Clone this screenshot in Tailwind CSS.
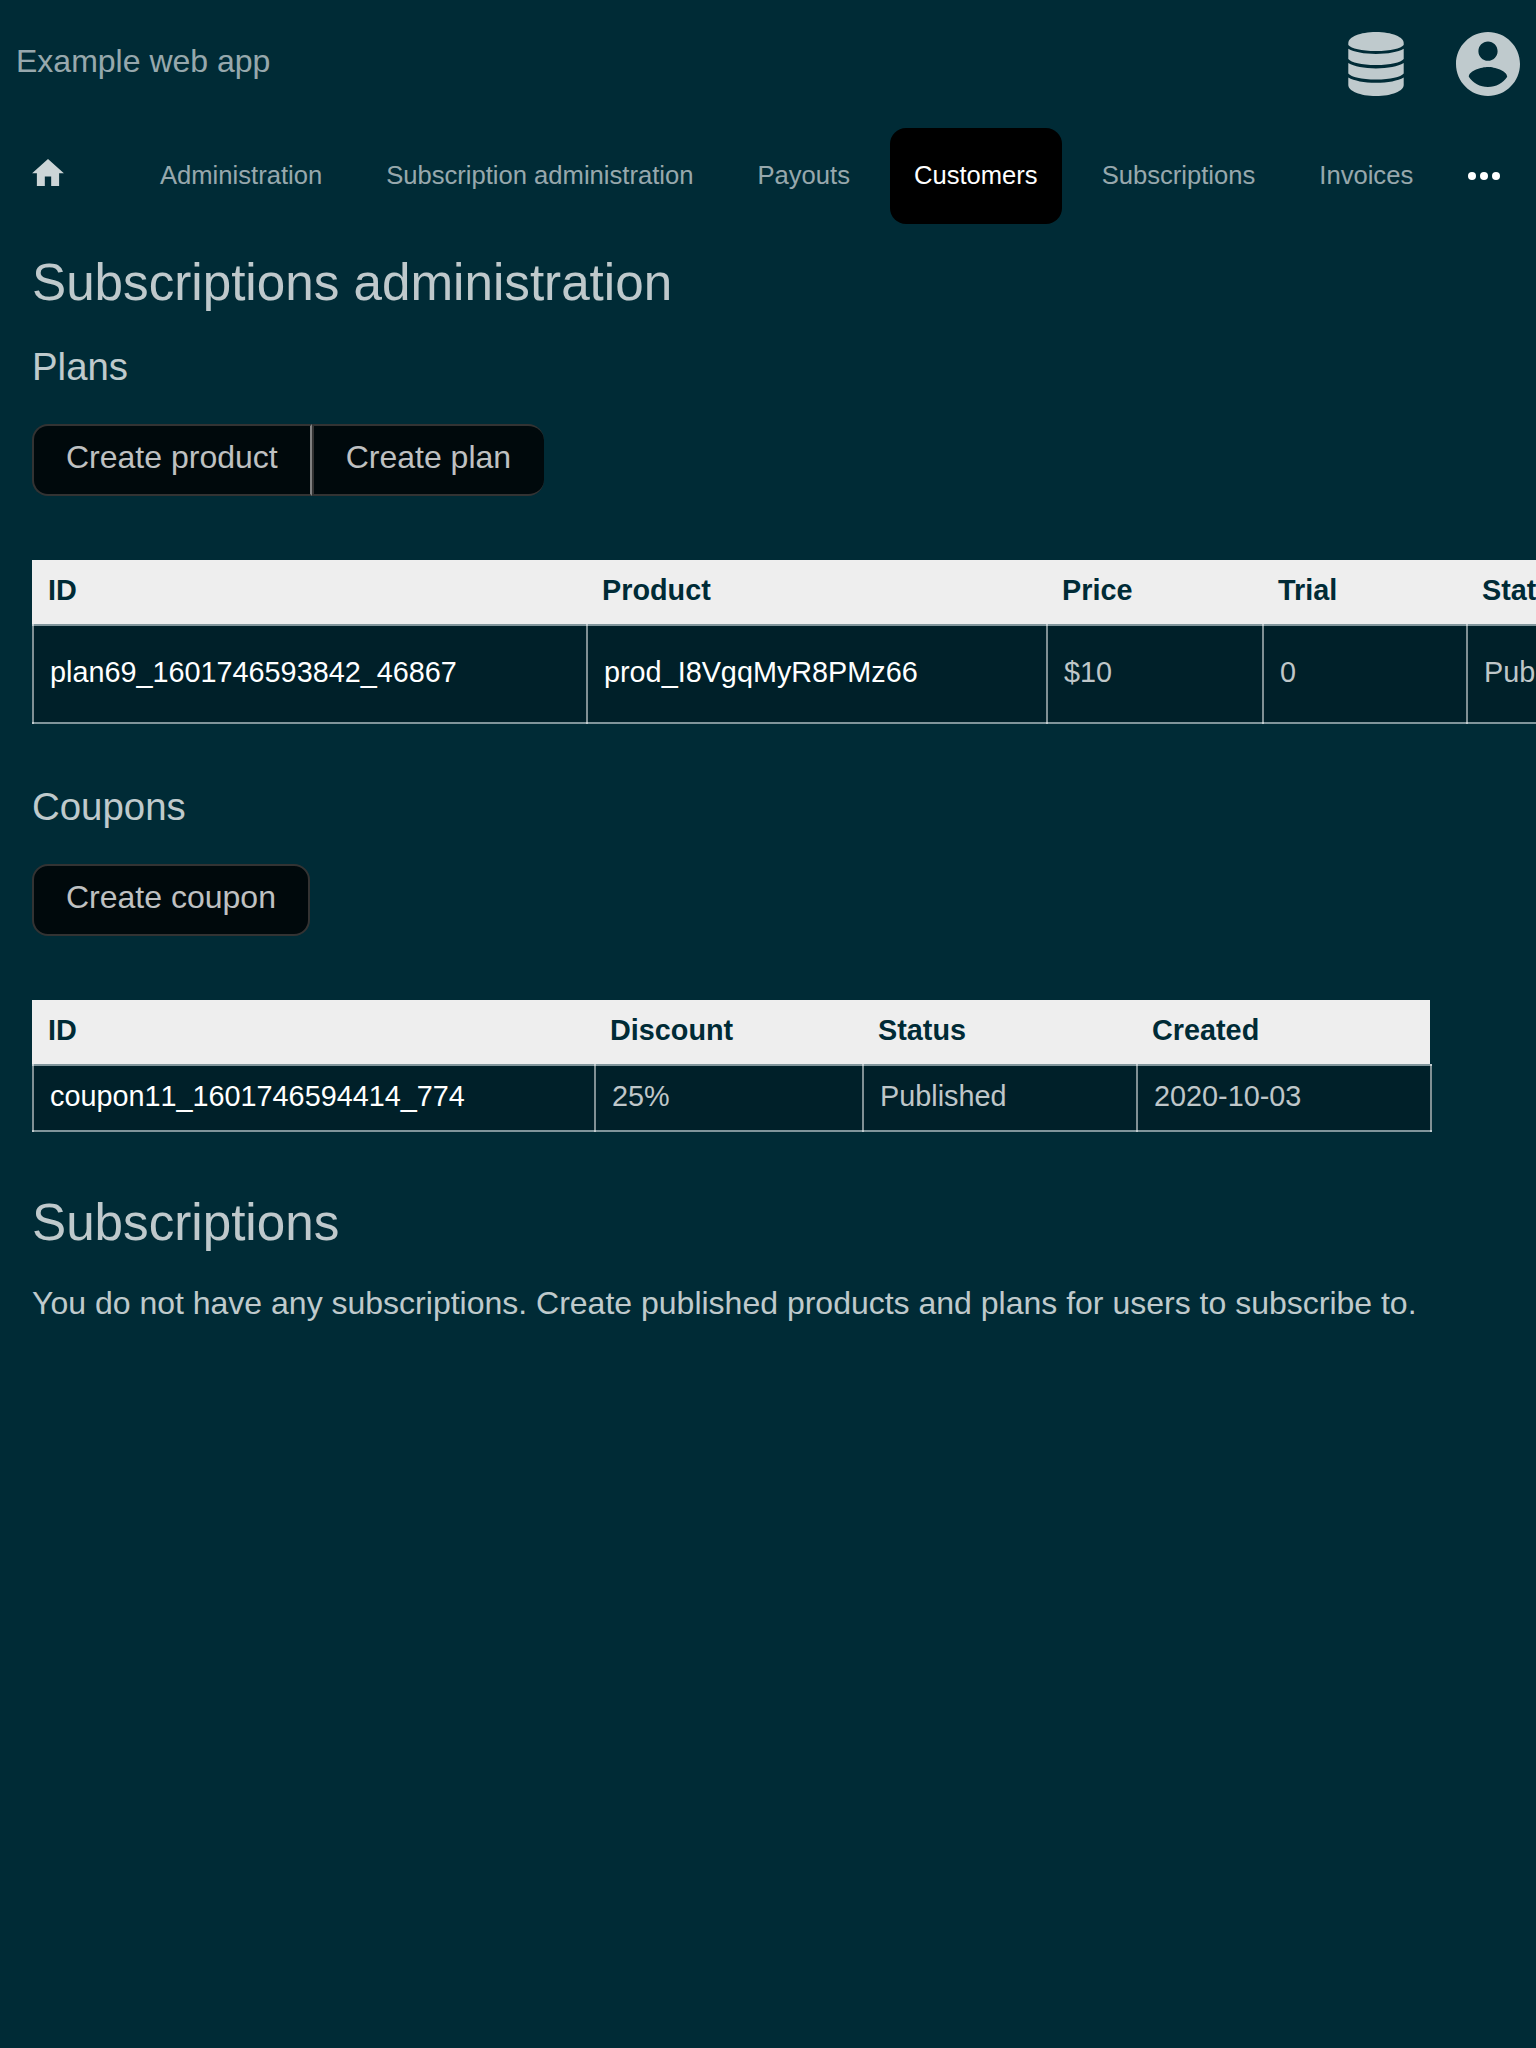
<!DOCTYPE html>
<html lang="en">
<head>
<meta charset="utf-8">
<title>Example web app</title>
<script src="https://cdn.jsdelivr.net/npm/@tailwindcss/browser@4"></script>
</head>
<body class="bg-[#002b36] font-['Liberation_Sans',Arial,sans-serif] text-[32px] leading-[38px] text-white/75 overflow-hidden h-[2048px]">
<header class="flex h-32 items-start justify-between px-4 pt-8">
  <h1 class="pt-[10px] text-white/60">Example web app</h1>
  <div class="flex gap-[52px]">
    <svg class="h-16 w-14" viewBox="0 0 56 64" fill="#bfcacd">
      <path d="M.3 11C.3 5 12 0 28 0s27.7 5 27.7 11v2c-3 3.500-13 6-27.700 6S3.300 16.500.3 13z"/>
      <path d="M.3 16.800C6 20 16 22 28 22s22-2 27.700-5.200V27c-3 3.500-13 6-27.700 6S3.300 30.500.3 27z"/>
      <path d="M.3 31C6 34.300 16 36.400 28 36.400s22-2.100 27.700-5.400v10.500c-3 3.500-13 6-27.700 6s-24.700-2.500-27.700-6z"/>
      <path d="M.3 45.500C6 48.800 16 50.800 28 50.800s22-2 27.700-5.300V53c0 6-11.700 11-27.700 11S.3 59 .3 53z"/>
    </svg>
    <svg class="size-16" viewBox="2 2 20 20" fill="#bfcacd"><path d="M12 2C6.48 2 2 6.48 2 12s4.48 10 10 10 10-4.48 10-10S17.52 2 12 2zm0 3c1.66 0 3 1.34 3 3s-1.34 3-3 3-3-1.34-3-3 1.34-3 3-3zm0 14.2c-2.5 0-4.71-1.28-6-3.22.03-1.99 4-3.08 6-3.08 1.99 0 5.97 1.09 6 3.08-1.29 1.94-3.5 3.22-6 3.22z"/></svg>
  </div>
</header>
<nav class="flex h-24 items-center gap-4 text-[25.6px] leading-[30px] text-white/60">
  <a class="ml-8 w-[88px] shrink-0 pb-2"><svg class="h-[27px] w-8" viewBox="2 3 20 17" fill="#ccd5d7"><path d="M10 20v-6h4v6h5v-8h3L12 3 2 12h3v8z"/></svg></a>
  <a class="px-6 pb-0.5 whitespace-nowrap">Administration</a>
  <a class="px-6 pb-0.5 whitespace-nowrap">Subscription administration</a>
  <a class="px-6 pb-0.5">Payouts</a>
  <a class="flex h-24 items-center rounded-2xl bg-black px-6 pb-0.5 text-white">Customers</a>
  <a class="px-6 pb-0.5">Subscriptions</a>
  <a class="px-6 pb-0.5">Invoices</a>
  <svg class="ml-[15px] h-2 w-8 shrink-0" viewBox="0 0 32 8" fill="#fff"><circle cx="4" cy="4" r="4"/><circle cx="16" cy="4" r="4"/><circle cx="28" cy="4" r="4"/></svg>
</nav>
<main class="px-8 pt-[29px]">
  <h2 class="text-[51.2px] leading-[60px]">Subscriptions administration</h2>
  <h3 class="mt-8 text-[38.4px] leading-[44px]">Plans</h3>
  <div class="mt-[35px] flex text-white/75">
    <a class="h-[72px] rounded-l-2xl border-2 border-[#333] border-r-[#808080] bg-[#00090c] px-8 pt-3">Create product</a>
    <a class="h-[72px] rounded-r-2xl border-2 border-r-0 border-[#333] bg-[#00090c] pl-8 pr-[33px] pt-3">Create plan</a>
  </div>
  <section class="mt-16 w-[1700px] text-[28.8px] leading-[32px]">
    <div class="grid h-16 grid-cols-[554px_460px_216px_204px_266px] items-center bg-[#eee] pl-4 pb-1 font-bold text-[#002b36]">
      <span>ID</span><span>Product</span><span>Price</span><span>Trial</span><span>Status</span>
    </div>
    <div class="grid h-[100px] grid-cols-[554px_460px_216px_204px_266px] border-y-2 border-white/50 bg-[#002029] bg-clip-padding *:-my-0.5 *:flex *:items-center *:border-l-2 *:border-white/50 *:pl-4 *:pb-1">
      <span class="text-white">plan69_1601746593842_46867</span><span class="text-white">prod_I8VgqMyR8PMz66</span><span>$10</span><span>0</span><span>Published</span>
    </div>
  </section>
  <h3 class="mt-[61px] text-[38.4px] leading-[44px]">Coupons</h3>
  <div class="mt-[35px] flex">
    <a class="h-[72px] rounded-2xl border-2 border-[#333] bg-[#00090c] px-8 pt-3">Create coupon</a>
  </div>
  <section class="mt-16 w-[1400px] text-[28.8px] leading-[32px]">
    <div class="mr-0.5 grid h-16 grid-cols-[562px_268px_274px_294px] items-center bg-[#eee] pl-4 pb-1 font-bold text-[#002b36]">
      <span>ID</span><span>Discount</span><span>Status</span><span>Created</span>
    </div>
    <div class="grid h-[68px] grid-cols-[562px_268px_274px_296px] border-y-2 border-white/50 bg-[#002029] bg-clip-padding *:-my-0.5 *:flex *:items-center *:border-l-2 *:border-white/50 *:pl-4 *:pb-1 *:last:border-r-2">
      <span class="text-white [font-kerning:none]">coupon11_1601746594414_774</span><span>25%</span><span>Published</span><span>2020-10-03</span>
    </div>
  </section>
  <h2 class="mt-[61px] text-[51.2px] leading-[60px]">Subscriptions</h2>
  <p class="mt-[31px]">You do not have any subscriptions. Create published products and plans for users to subscribe to.</p>
</main>
</body>
</html>
